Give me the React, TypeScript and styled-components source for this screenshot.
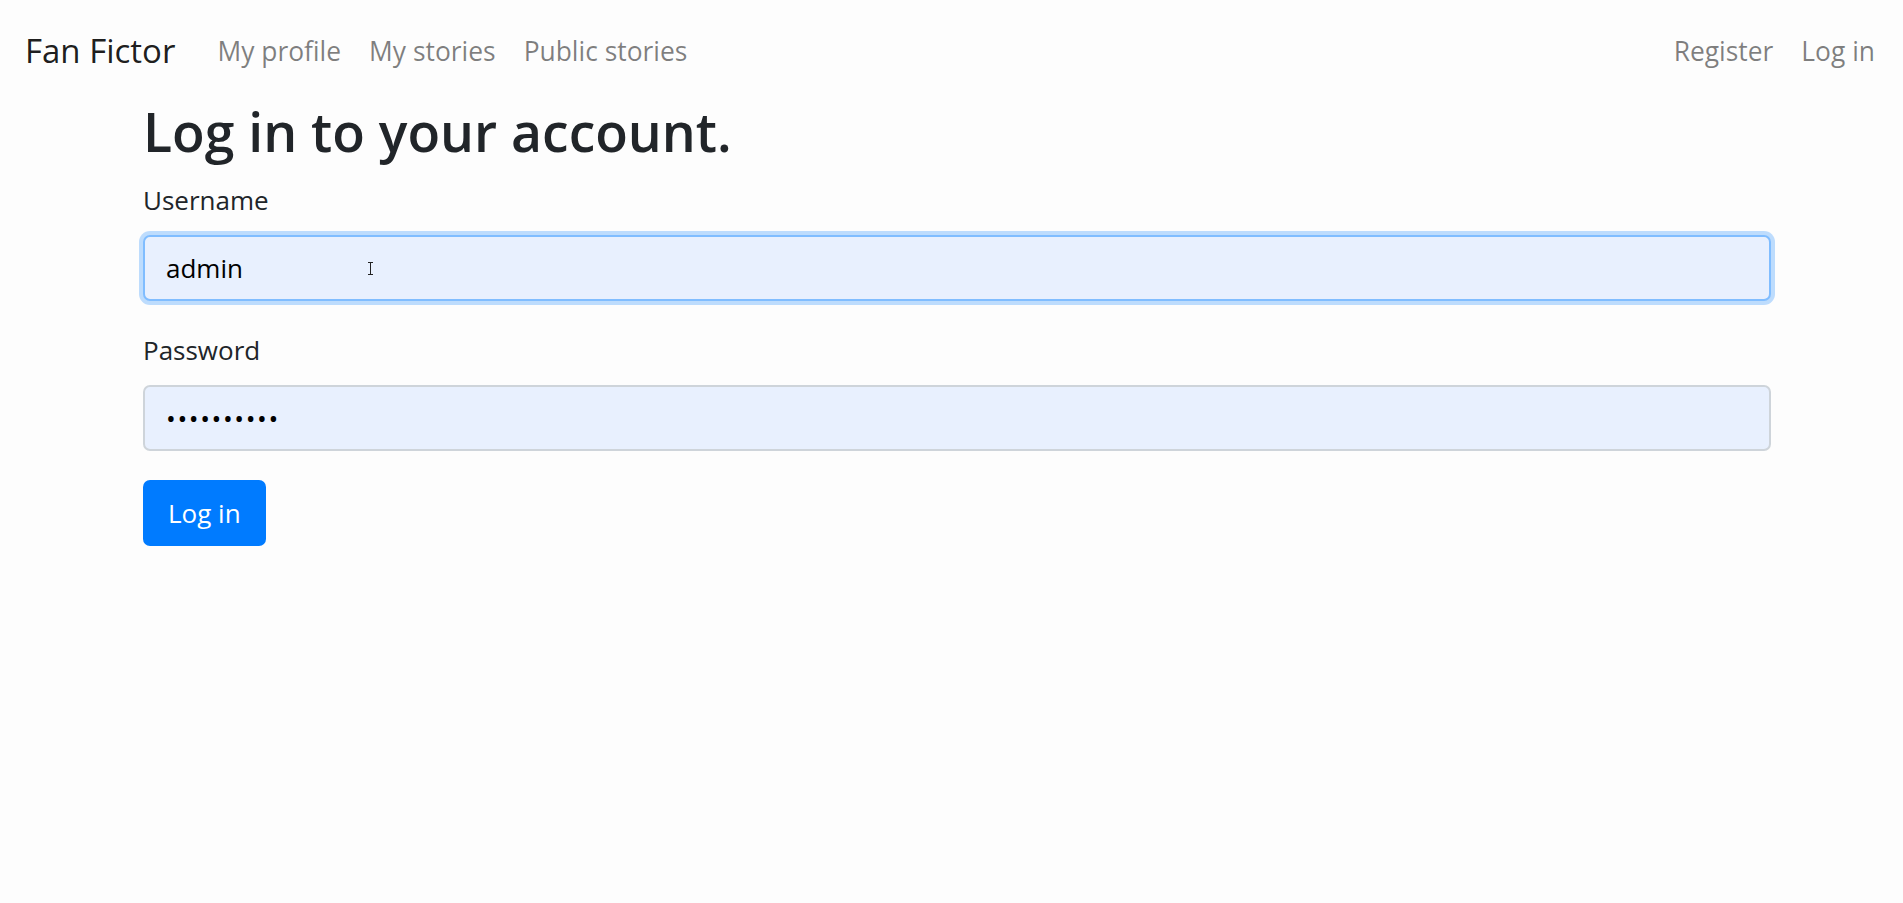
import { FC } from 'react'
import styled, { createGlobalStyle } from 'styled-components'

const GlobalStyle = createGlobalStyle`
  html, body {
    margin: 0;
    padding: 0;
    background: #fdfdfd;
  }
  body {
    font-family: 'Segoe UI', 'Open Sans', 'Noto Sans', sans-serif;
    font-size: 26px;
    line-height: 1.5;
    color: #212529;
  }
  * {
    box-sizing: border-box;
  }
`

const navLeft = ['My profile', 'My stories', 'Public stories']
const navRight = ['Register', 'Log in']

const App: FC = () => {
  return (
    <>
      <GlobalStyle />
      <Navbar>
        <Brand>Fan Fictor</Brand>
        <NavList>
          {navLeft.map((item) => (
            <NavLink key={item}>{item}</NavLink>
          ))}
        </NavList>
        <NavList $right>
          {navRight.map((item) => (
            <NavLink key={item}>{item}</NavLink>
          ))}
        </NavList>
      </Navbar>
      <Main>
        <Title>Log in to your account.</Title>
        <FormGroup>
          <Label htmlFor="username">Username</Label>
          <FieldWrap>
            <Input id="username" type="text" defaultValue="admin" $focused />
            <Caret viewBox="0 0 7 13" width="7" height="13">
              <path d="M1 0.5h5M1 12.5h5M3.5 0.5v12" stroke="#222" strokeWidth="1" fill="none" />
            </Caret>
          </FieldWrap>
        </FormGroup>
        <FormGroup>
          <Label htmlFor="password">Password</Label>
          <Input id="password" type="password" defaultValue="1234567890" $spaced />
        </FormGroup>
        <SubmitButton type="button">Log in</SubmitButton>
      </Main>
    </>
  )
}

const Navbar = styled.nav`
  display: flex;
  align-items: center;
  padding: 16px 28px 12px 25px;
  height: 98px;
`

const Brand = styled.a`
  font-size: 33px;
  line-height: 52px;
  color: rgba(0, 0, 0, 0.9);
  margin-right: 28px;
  white-space: nowrap;
  cursor: pointer;
`

const NavList = styled.div<{ $right?: boolean }>`
  display: flex;
  flex-direction: row;
  margin-left: ${(p) => (p.$right ? 'auto' : '0')};
`

const NavLink = styled.a`
  padding: 0 14px;
  color: rgba(0, 0, 0, 0.5);
  font-size: 26.4px;
  line-height: 42px;
  white-space: nowrap;
  cursor: pointer;
  &:last-child {
    padding-right: 0;
  }
`

const Main = styled.main`
  padding: 0 132px 0 143px;
`

const Title = styled.h2`
  margin: 0 0 14px;
  font-size: 53.5px;
  font-weight: 600;
  line-height: 67px;
`

const FormGroup = styled.div`
  margin-bottom: 28px;
`

const Label = styled.label`
  display: inline-block;
  margin-bottom: 14px;
  font-size: 26px;
  line-height: 42px;
`

const FieldWrap = styled.div`
  position: relative;
`

const Input = styled.input<{ $focused?: boolean; $spaced?: boolean }>`
  display: block;
  width: 100%;
  height: 66px;
  padding: 10px 21px;
  font-family: inherit;
  font-size: 26px;
  line-height: 42px;
  letter-spacing: ${(p) => (p.$spaced ? '1.6px' : 'normal')};
  color: #000;
  background: #e8f0fe;
  border: 2px solid ${(p) => (p.$focused ? '#80bdff' : '#ced4da')};
  border-radius: 7px;
  outline: none;
  box-shadow: ${(p) => (p.$focused ? '0 0 0 4px rgba(0, 123, 255, 0.25)' : 'none')};
`

const Caret = styled.svg`
  position: absolute;
  left: 224px;
  top: 27px;
`

const SubmitButton = styled.button`
  display: inline-block;
  height: 66px;
  margin-top: 1px;
  padding: 0 25px;
  font-family: inherit;
  font-size: 26px;
  line-height: 42px;
  color: #fff;
  background: #007bff;
  border: none;
  border-radius: 7px;
  cursor: pointer;
`

export default App
